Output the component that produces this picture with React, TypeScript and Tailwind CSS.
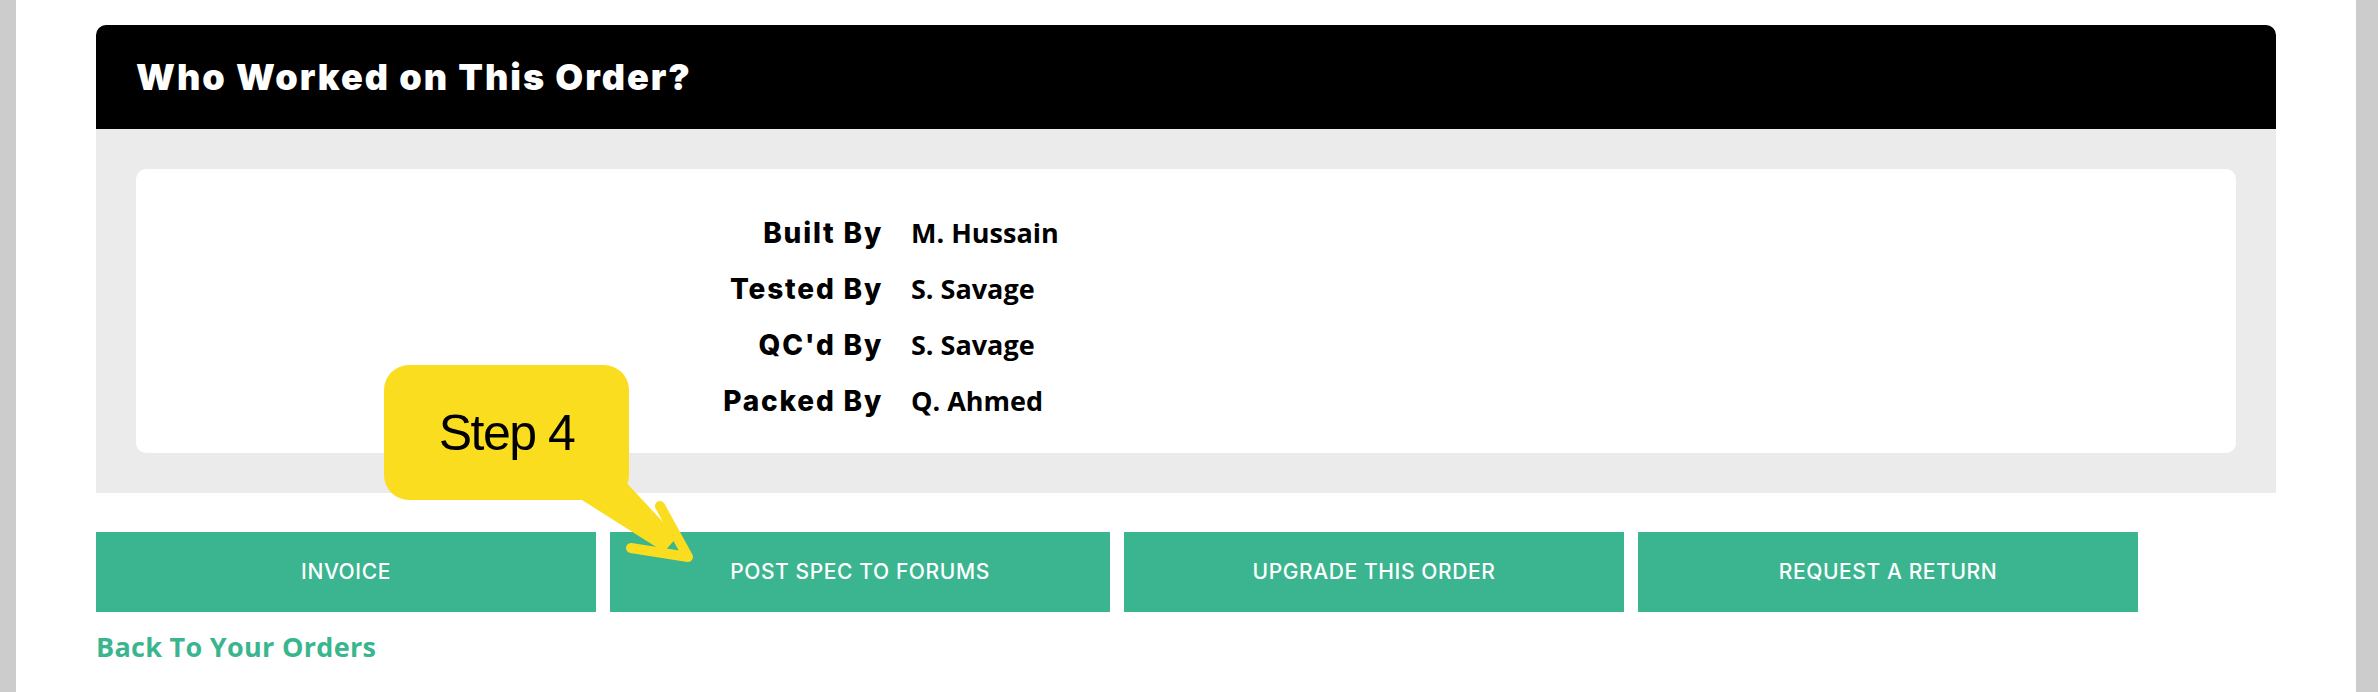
const workers = [
  { label: 'Built By', name: 'M. Hussain' },
  { label: 'Tested By', name: 'S. Savage' },
  { label: "QC'd By", name: 'S. Savage' },
  { label: 'Packed By', name: 'Q. Ahmed' },
];

const actions = ['Invoice', 'Post Spec to Forums', 'Upgrade This Order', 'Request a Return'];

function StepCallout() {
  return (
    <>
      {/* Callout bubble */}
      <div className="absolute left-[368px] top-[365px] z-10 flex h-[135px] w-[245px] items-center justify-center rounded-[25px] bg-[#fadd1f]">
        <span className="font-['Liberation_Sans',Arial,sans-serif] text-[50px] leading-none tracking-[-1.5px] text-black">
          Step 4
        </span>
      </div>
      {/* Arrow */}
      <svg
        className="absolute left-[544px] top-[470px] z-10"
        width="140"
        height="100"
        viewBox="0 0 140 100"
        fill="none"
      >
        <polygon points="22,30 62,8 117,67 104,82" fill="#fadd1f" />
        <polyline
          points="71,78 128,87 100,36"
          stroke="#fadd1f"
          strokeWidth="10"
          strokeLinecap="round"
          strokeLinejoin="round"
        />
      </svg>
    </>
  );
}

export default function App() {
  return (
    <div className="flex h-[692px] w-full overflow-hidden bg-white">
      <div className="w-[16px] shrink-0 bg-[#cccccc]" />

      <div className="relative flex-1 px-[80px] pt-[25px]">
        {/* Order card */}
        <div>
          <div className="flex h-[104px] items-center rounded-t-[10px] bg-black pl-[40px]">
            <h2 className="font-['Inter',sans-serif] text-[36px] font-black tracking-[2px] text-white">
              Who Worked on This Order?
            </h2>
          </div>
          <div className="bg-[#ebebeb] p-[40px]">
            <div className="h-[284px] rounded-[10px] bg-white pt-[36px]">
              {workers.map((w) => (
                <div key={w.label} className="flex h-[56px] items-baseline leading-[56px]">
                  <div className="w-[747px] shrink-0 text-right font-['Inter',sans-serif] text-[28px] font-extrabold tracking-[1.8px] text-black">
                    {w.label}
                  </div>
                  <div className="pl-[28px] font-['Open_Sans',sans-serif] text-[27px] font-bold text-black">
                    {w.name}
                  </div>
                </div>
              ))}
            </div>
          </div>
        </div>

        {/* Actions */}
        <div className="mt-[39px] flex gap-[14px]">
          {actions.map((a) => (
            <button
              key={a}
              className="flex h-[80px] w-[500px] items-center justify-center bg-[#3bb58f] font-['Inter',sans-serif] text-[21px] font-medium uppercase tracking-[0.6px] text-white"
            >
              {a}
            </button>
          ))}
        </div>

        <a className="mt-[17px] block font-['Open_Sans',sans-serif] text-[27px] font-bold leading-[36px] tracking-[0.3px] text-[#3bb58f]">
          Back To Your Orders
        </a>

        <StepCallout />
      </div>

      <div className="w-[22px] shrink-0 bg-[#cccccc]" />
    </div>
  );
}
